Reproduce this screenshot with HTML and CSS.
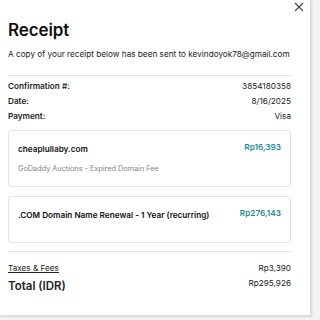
FILE: index.html
```html
<!DOCTYPE html>
<html>
<head>
<meta charset="utf-8">
<link rel="stylesheet" href="styles.css">
</head>
<body>
<div class="page">
  <div class="panel">
    <button class="close" aria-label="Close">
      <svg width="10" height="10" viewBox="0 0 10 10"><path d="M1 1L9 9M9 1L1 9" stroke="#444" stroke-width="1.1" fill="none"/></svg>
    </button>
    <h1 class="title">Receipt</h1>
    <p class="sub">A copy of your receipt below has been sent to kevindoyok78@gmail.com</p>
    <hr class="rule">
    <div class="meta">
      <div class="row"><span class="lbl">Confirmation #:</span><span>3854180358</span></div>
      <div class="row"><span class="lbl">Date:</span><span>8/16/2025</span></div>
      <div class="row"><span class="lbl">Payment:</span><span>Visa</span></div>
    </div>
    <div class="card card1">
      <div class="crow">
        <div>
          <div class="iname">cheaplullaby.com</div>
          <div class="idesc">GoDaddy Auctions - Expired Domain Fee</div>
        </div>
        <div class="price">Rp16,393</div>
      </div>
    </div>
    <div class="card card2">
      <div class="crow">
        <div class="iname">.COM Domain Name Renewal - 1 Year (recurring)</div>
        <div class="price">Rp276,143</div>
      </div>
    </div>
    <hr class="rule rule2">
    <div class="row tax"><a class="taxlink">Taxes &amp; Fees</a><span>Rp3,390</span></div>
    <div class="row total"><span class="tlbl">Total (IDR)</span><span class="tval">Rp295,926</span></div>
  </div>
</div>
</body>
</html>
```
FILE: styles.css
```css
html, body { margin: 0; padding: 0; }
body { background: #f3f3f3; font-family: Inter, "Noto Sans", sans-serif; color: #111; }
.page { width: 320px; height: 320px; overflow: hidden; }
.panel {
  position: relative;
  width: 311px; height: 316px; box-sizing: border-box;
  background: #fff;
  border-right: 1px solid #dcdcdc; border-bottom: 1px solid #dcdcdc;
  box-shadow: 1px 1px 2px rgba(0,0,0,0.12);
  padding: 0 19px 0 8px;
}
.close { position: absolute; right: 6px; top: 2px; background: none; border: 0; padding: 0; width: 10px; height: 10px; }
.close svg { display: block; }
.title { margin: 0; padding-top: 19px; font-size: 17px; font-weight: 600; line-height: 22px; letter-spacing: -0.1px; }
.sub { margin: 8px 0 0; font-size: 8.2px; line-height: 10px; color: #222; }
.rule { border: 0; border-top: 1px solid #e2e2e2; margin: 16px 0 0; }
.meta { margin-top: 3px; }
.row { display: flex; justify-content: space-between; font-size: 8.2px; line-height: 15px; color: #222; }
.lbl { font-weight: 600; }
.card { border: 1px solid #e3e3e3; border-radius: 3px; box-sizing: border-box; padding: 0 9px 0 9px; }
.card1 { height: 57px; padding-top: 13px; margin-top: 6px; }
.card2 { height: 47px; padding-top: 13px; margin-top: 9px; }
.crow { display: flex; justify-content: space-between; align-items: flex-start; }
.iname { font-size: 8.2px; font-weight: 600; line-height: 10px; color: #111; }
.idesc { margin-top: 10px; font-size: 7.3px; color: #858585; line-height: 9px; }
.price { font-size: 8.2px; font-weight: 600; color: #1b8a94; line-height: 10px; margin-top: -2px; }
.rule2 { margin-top: 8px; }
.tax { margin-top: 9px; }
.taxlink { text-decoration: underline; color: #222; }
.total { margin-top: 1px; align-items: flex-start; }
.tlbl { font-size: 11.5px; font-weight: 600; line-height: 18px; }
.tval { font-size: 8.2px; line-height: 12px; }
```
